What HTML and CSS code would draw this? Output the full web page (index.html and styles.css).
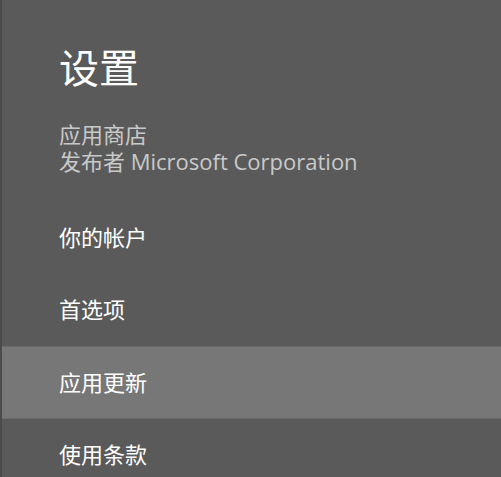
FILE: index.html
```html
<!DOCTYPE html>
<html lang="zh-CN">
<head>
<meta charset="utf-8">
<title>设置</title>
<link rel="stylesheet" href="styles.css">
</head>
<body>
<div class="panel">
  <header class="head">
    <h1 class="title">设置</h1>
    <div class="meta">
      <div class="meta-line">应用商店</div>
      <div class="meta-line">发布者 Microsoft Corporation</div>
    </div>
  </header>
  <nav class="menu">
    <div class="item">你的帐户</div>
    <div class="item">首选项</div>
    <div class="item item-active">应用更新</div>
    <div class="item">使用条款</div>
  </nav>
</div>
</body>
</html>
```

FILE: styles.css
```css
html, body {
  margin: 0;
  padding: 0;
  background: #5a5a5a;
}
body {
  font-family: "Open Sans", "Noto Sans CJK SC", sans-serif;
  color: #ffffff;
}
.panel {
  height: 477px;
  overflow: hidden;
  border-left: 2px solid #4b4b4b;
  background: #5a5a5a;
}
.head {
  padding: 44px 0 0 57px;
}
.title {
  margin: 0;
  font-size: 40px;
  line-height: 48px;
  font-weight: 400;
  color: #ffffff;
}
.meta {
  margin-top: 29px;
  color: #c9c9c9;
  font-size: 22px;
  line-height: 27px;
}
.menu {
  margin-top: 27px;
  display: flex;
  flex-direction: column;
}
.item {
  height: 72px;
  box-sizing: border-box;
  padding: 0 0 4px 57px;
  display: flex;
  align-items: center;
  font-size: 22px;
  color: #ffffff;
}
.item-active {
  height: 73px;
  background: #777777;
  border-top: 1px solid #6a6a6a;
  border-bottom: 1px solid #6a6a6a;
}
```
